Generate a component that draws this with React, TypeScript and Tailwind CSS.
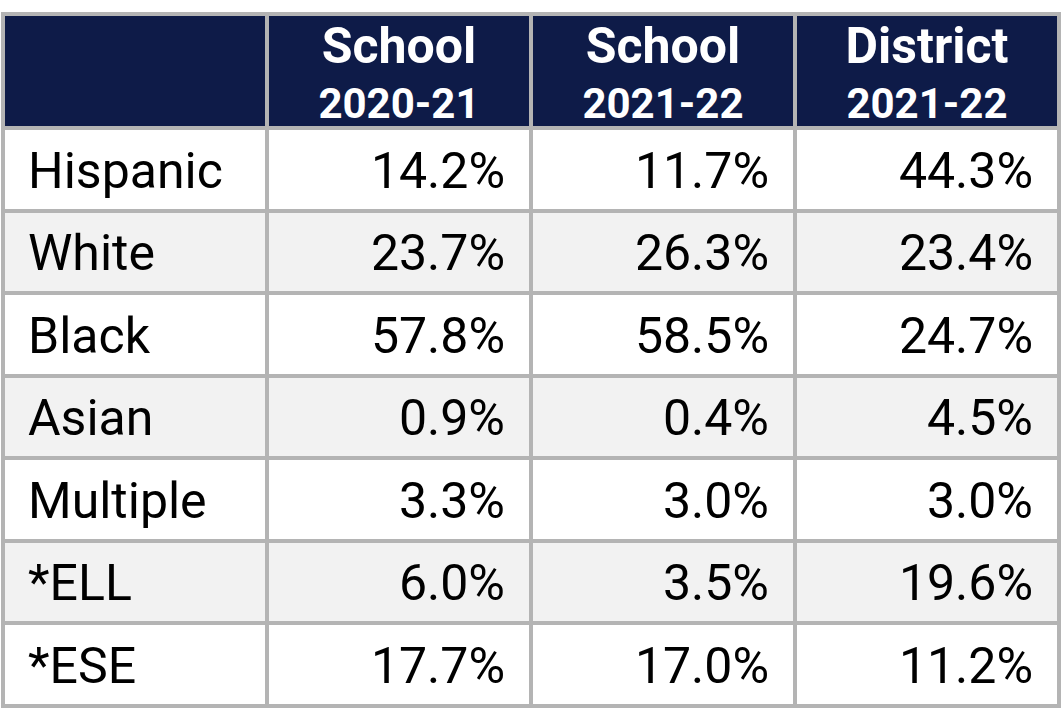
import React from "react";

const rows: [string, string, string, string][] = [
  ["Hispanic", "14.2%", "11.7%", "44.3%"],
  ["White", "23.7%", "26.3%", "23.4%"],
  ["Black", "57.8%", "58.5%", "24.7%"],
  ["Asian", "0.9%", "0.4%", "4.5%"],
  ["Multiple", "3.3%", "3.0%", "3.0%"],
  ["*ELL", "6.0%", "3.5%", "19.6%"],
  ["*ESE", "17.7%", "17.0%", "11.2%"],
];

const heads: [string, string][] = [
  ["School", "2020-21"],
  ["School", "2021-22"],
  ["District", "2021-22"],
];

export default function App() {
  return (
    <div
      className="w-[1064px] h-[727px] bg-white pt-[12px] pl-[1px]"
      style={{ fontFamily: "Roboto, 'Liberation Sans', sans-serif" }}
    >
      <div className="w-[1060px] bg-[#b4b4b4] p-[4px] grid grid-cols-[260px_260px_260px_260px] grid-rows-[110px_79px_78px_79px_78px_79px_78px_79px] gap-[4px]">
        <div className="bg-[#0e1b48]" />
        {heads.map(([a, b], i) => (
          <div key={i} className="bg-[#0e1b48] text-white font-bold text-center pt-[5px]">
            <div className="text-[50px] leading-[50px]">{a}</div>
            <div className="text-[42px] leading-[42px] mt-[12px]">{b}</div>
          </div>
        ))}
        {rows.map((r, ri) => {
          const bg = ri % 2 === 0 ? "bg-white" : "bg-[#f2f2f2]";
          return (
            <React.Fragment key={ri}>
              <div className={`${bg} flex items-center pl-[23px] pt-[2px] text-[50px] leading-none text-black`}>
                {r[0]}
              </div>
              {r.slice(1).map((v, ci) => (
                <div
                  key={ci}
                  className={`${bg} flex items-center justify-end pr-[24px] pt-[2px] text-[50px] leading-none text-black`}
                >
                  {v}
                </div>
              ))}
            </React.Fragment>
          );
        })}
      </div>
    </div>
  );
}
